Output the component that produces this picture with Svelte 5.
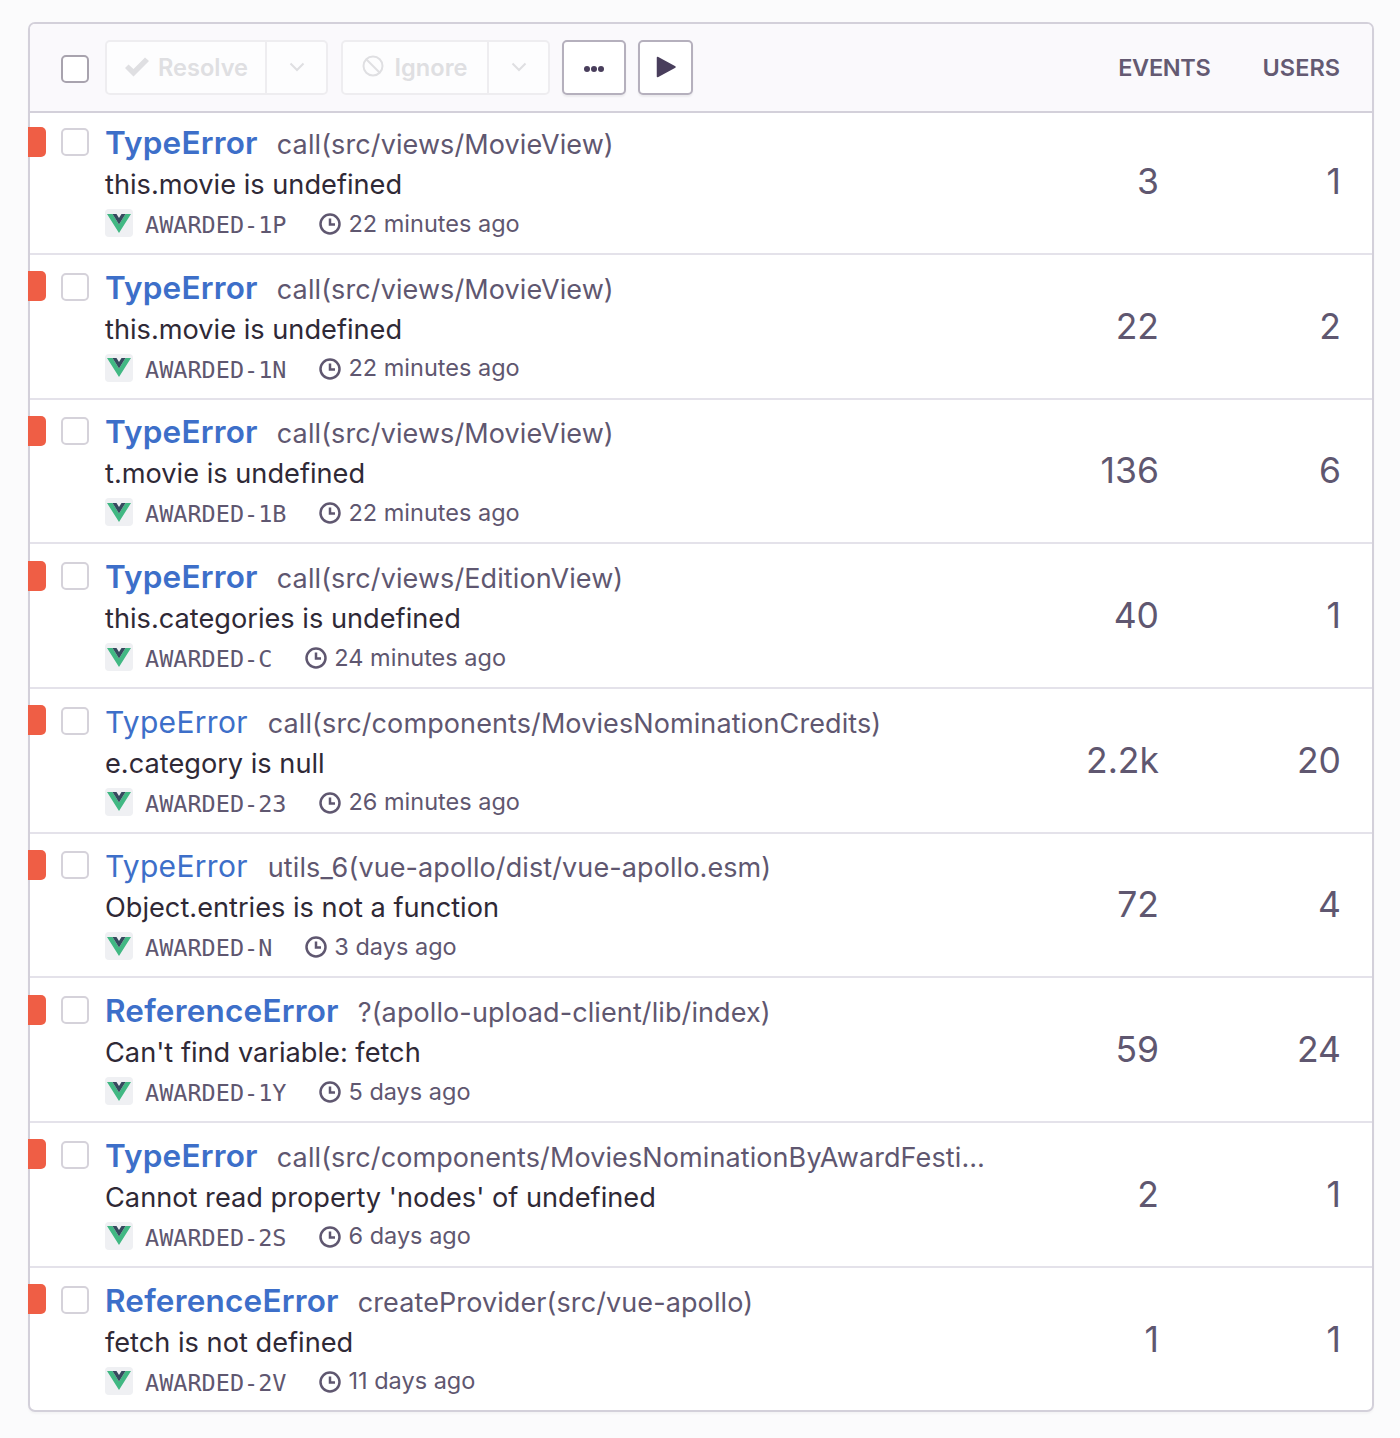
<script>
  const issues = [
    { title: "TypeError", strong: true, culprit: "call(src/views/MovieView)", message: "this.movie is undefined", id: "AWARDED-1P", time: "22 minutes ago", events: "3", users: "1" },
    { title: "TypeError", strong: true, culprit: "call(src/views/MovieView)", message: "this.movie is undefined", id: "AWARDED-1N", time: "22 minutes ago", events: "22", users: "2" },
    { title: "TypeError", strong: true, culprit: "call(src/views/MovieView)", message: "t.movie is undefined", id: "AWARDED-1B", time: "22 minutes ago", events: "136", users: "6" },
    { title: "TypeError", strong: true, culprit: "call(src/views/EditionView)", message: "this.categories is undefined", id: "AWARDED-C", time: "24 minutes ago", events: "40", users: "1" },
    { title: "TypeError", strong: false, culprit: "call(src/components/MoviesNominationCredits)", message: "e.category is null", id: "AWARDED-23", time: "26 minutes ago", events: "2.2k", users: "20" },
    { title: "TypeError", strong: false, culprit: "utils_6(vue-apollo/dist/vue-apollo.esm)", message: "Object.entries is not a function", id: "AWARDED-N", time: "3 days ago", events: "72", users: "4" },
    { title: "ReferenceError", strong: true, culprit: "?(apollo-upload-client/lib/index)", message: "Can't find variable: fetch", id: "AWARDED-1Y", time: "5 days ago", events: "59", users: "24" },
    { title: "TypeError", strong: true, culprit: "call(src/components/MoviesNominationByAwardFestivalList)", message: "Cannot read property 'nodes' of undefined", id: "AWARDED-2S", time: "6 days ago", events: "2", users: "1" },
    { title: "ReferenceError", strong: true, culprit: "createProvider(src/vue-apollo)", message: "fetch is not defined", id: "AWARDED-2V", time: "11 days ago", events: "1", users: "1" },
  ];
</script>

<div class="page">
  <div class="panel">
    <div class="toolbar">
      <span class="check"></span>
      <div class="group">
        <button class="main resolve">
          <svg width="24" height="20" viewBox="0 0 24 20"><path d="M0 11l3.500-3.500 5 4.500L20 .5 24 4 8.500 19.500z" fill="currentColor" /></svg>
          Resolve
        </button>
        <button class="caret">
          <svg width="16" height="10" viewBox="0 0 16 10"><path d="M1.500 1.500L8 8l6.500-6.500" fill="none" stroke="currentColor" stroke-width="2" /></svg>
        </button>
      </div>
      <div class="group">
        <button class="main ignore">
          <svg width="24" height="24" viewBox="0 0 24 24"><circle cx="12" cy="12" r="9.500" fill="none" stroke="currentColor" stroke-width="2" /><path d="M5.500 5.500l13 13" stroke="currentColor" stroke-width="2" /></svg>
          Ignore
        </button>
        <button class="caret">
          <svg width="16" height="10" viewBox="0 0 16 10"><path d="M1.500 1.500L8 8l6.500-6.500" fill="none" stroke="currentColor" stroke-width="2" /></svg>
        </button>
      </div>
      <button class="tool more">
        <svg width="22" height="8" viewBox="0 0 22 8"><circle cx="4" cy="4" r="3" /><circle cx="11" cy="4" r="3" /><circle cx="18" cy="4" r="3" /></svg>
      </button>
      <button class="tool play">
        <svg width="20" height="22" viewBox="0 0 20 22"><path d="M1.500 1.500v19L19 11z" stroke-linejoin="round" stroke="currentColor" stroke-width="1.500" fill="currentColor" /></svg>
      </button>
      <div class="heads">
        <span class="events-head">EVENTS</span>
        <span class="users-head">USERS</span>
      </div>
    </div>

    {#each issues as issue}
      <div class="row">
        <span class="level"></span>
        <span class="check"></span>
        <div class="info">
          <div class="title-line">
            <span class="title" class:strong={issue.strong}>{issue.title}</span>
            <span class="culprit">{issue.culprit}</span>
          </div>
          <div class="message">{issue.message}</div>
          <div class="meta">
            <span class="platform">
              <svg width="24" height="19" viewBox="0 0 24 19"><path d="M0 0h5.500L12 10.500 18.500 0H24L12 19z" fill="#41b883" /><path d="M5.500 0h4L12 4l2.500-4h4L12 10.500z" fill="#35495e" /></svg>
            </span>
            <span class="short-id">{issue.id}</span>
            <svg class="clock" width="24" height="24" viewBox="0 0 24 24"><circle cx="12" cy="12" r="9.500" fill="none" stroke="currentColor" stroke-width="2.500" /><path d="M12 6.500V12.500H17" fill="none" stroke="currentColor" stroke-width="2.500" /></svg>
            <span class="time">{issue.time}</span>
          </div>
        </div>
        <div class="count events">{issue.events}</div>
        <div class="count users">{issue.users}</div>
      </div>
    {/each}
  </div>
</div>

<style>
  :global(body) {
    background: #fbfbfc;
  }

  .page {
    padding: 22px 26px 26px 28px;
    font-family: Inter, "Open Sans", sans-serif;
  }

  .panel {
    border: 2px solid #d3d0da;
    border-radius: 7px;
    background: #fff;
    box-shadow: 0 2px 2px rgba(0, 0, 0, 0.03);
  }

  .toolbar {
    display: flex;
    align-items: center;
    height: 89px;
    padding: 0 0 1px 31px;
    background: #faf9fc;
    border-bottom: 2px solid #d3d0da;
    border-radius: 5px 5px 0 0;
    box-sizing: border-box;
  }

  .check {
    display: block;
    flex: none;
    box-sizing: border-box;
    width: 28px;
    height: 28px;
    background: #fff;
    border: 2px solid #d5d2da;
    border-radius: 5px;
  }

  .toolbar .check {
    border-color: #a8a3ae;
    margin: 3px 16px 0 0;
  }

  button {
    font: inherit;
    margin: 0;
    padding: 0;
    background: #fff;
    display: flex;
    align-items: center;
    justify-content: center;
  }

  .group {
    display: flex;
    height: 55px;
    margin-right: 13px;
    border: 2px solid #eeedf0;
    border-radius: 5px;
    box-sizing: border-box;
    background: #fdfdfe;
  }

  .group + .group {
    margin-right: 12px;
  }

  .group button {
    border: 0;
    background: none;
    color: #dfdfe2;
    font-size: 23.600px;
    font-weight: 600;
    height: 100%;
  }

  .main {
    gap: 9px;
  }

  .resolve {
    width: 158px;
  }

  .resolve svg {
    margin-left: 1px;
  }

  .ignore {
    width: 144px;
  }

  .ignore svg {
    margin: -3px 1px 0 -2px;
  }

  .caret {
    width: 61px;
    border-left: 2px solid #eeedf0 !important;
  }

  .tool {
    height: 55px;
    box-sizing: border-box;
    border: 2px solid #b5b0bd;
    border-radius: 5px;
    color: #493e5c;
    fill: #493e5c;
    box-shadow: 0 2px 2px rgba(0, 0, 0, 0.06);
  }

  .more {
    width: 64px;
    margin-right: 12px;
  }

  .more svg {
    margin-top: 3px;
  }

  .play {
    width: 55px;
  }

  .heads {
    margin-left: auto;
    display: flex;
    align-items: center;
    font-size: 23.500px;
    font-weight: 600;
    color: #645a72;
    padding-right: 32px;
  }

  .events-head {
    letter-spacing: -0.3px;
  }

  .users-head {
    margin-left: 52px;
  }

  /* first row starts tighter under the toolbar than the rest */
  .row {
    --shift: 1.700px;
    position: relative;
    display: flex;
    box-sizing: border-box;
    height: 144.700px;
    padding: var(--shift) 0 0 31px;
    border-bottom: 2px solid #e4e2ea;
  }

  .toolbar + .row {
    --shift: 0px;
    height: 143px;
    margin-top: -1px;
  }

  .row:last-child {
    border-bottom: 0;
    height: 142px;
  }

  .row .check {
    margin: 16px 16px 0 0;
  }

  .level {
    position: absolute;
    left: -2px;
    top: calc(14.500px + var(--shift));
    width: 18px;
    height: 30px;
    background: #ef5e45;
    border-radius: 0 5px 5px 0;
  }

  .info {
    width: 886px;
    flex: none;
    padding-top: 11px;
    min-width: 0;
  }

  .title-line {
    display: flex;
    align-items: baseline;
    gap: 19px;
    height: 40px;
    line-height: 40px;
  }

  .title {
    flex: none;
    font-size: 30px;
    letter-spacing: 0.3px;
    margin-right: 1px;
    color: #3d6fc9;
  }

  .title.strong {
    font-size: 31.500px;
    letter-spacing: 0.2px;
    font-weight: 600;
    margin-right: 0;
  }

  .culprit {
    font-size: 27px;
    letter-spacing: 0.1px;
    color: #5f5770;
    white-space: nowrap;
    overflow: hidden;
    text-overflow: ellipsis;
  }

  .message {
    font-size: 27.200px;
    line-height: 40px;
    margin-top: 2px;
    color: #2f2936;
  }

  .meta {
    display: flex;
    align-items: center;
    height: 40px;
    margin-top: -2px;
    color: #5f5770;
  }

  .platform {
    display: flex;
    align-items: center;
    justify-content: center;
    flex: none;
    width: 28px;
    height: 28px;
    background: #eff0f3;
    border-radius: 4px;
    margin-right: 12px;
  }

  .short-id {
    font-family: "DejaVu Sans Mono", monospace;
    font-size: 23.500px;
    padding-top: 4px;
    margin-right: 32px;
  }

  .clock {
    margin: 2px 6px 0 0;
  }

  .time {
    font-size: 23.500px;
  }

  .count {
    font-size: 35.500px;
    line-height: 40px;
    color: #5f5770;
    text-align: right;
    padding-top: 50px;
    flex: none;
  }

  .events {
    width: 168px;
  }

  .users {
    width: 182px;
  }
</style>
